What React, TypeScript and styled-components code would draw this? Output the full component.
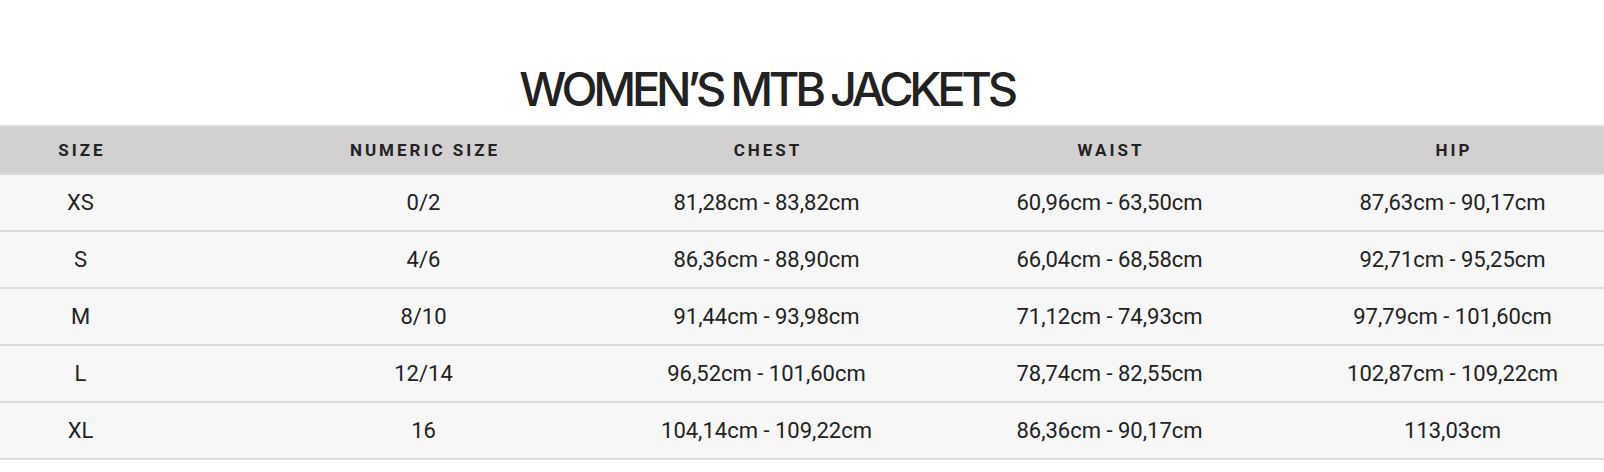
import React, { FC } from "react";
import styled, { createGlobalStyle } from "styled-components";

const GlobalStyle = createGlobalStyle`
  html, body {
    margin: 0;
    padding: 0;
    background: #ffffff;
  }

  body {
    width: 1604px;
    height: 472px;
    overflow: hidden;
  }
`;

const Page = styled.div`
  width: 1604px;
  overflow: hidden;
`;

const Sheet = styled.section`
  width: 1715px;
  margin-left: -91px;
`;

const Title = styled.h2`
  margin: 0;
  padding: 65px 0 13px;

  font-family: Inter, "Liberation Sans", sans-serif;
  font-size: 47px;
  font-weight: 500;
  line-height: 47px;
  letter-spacing: -4.3px;
  text-align: center;
  color: #222222;
`;

const Table = styled.table`
  width: 100%;
  border-collapse: collapse;
  table-layout: fixed;
  font-family: Roboto, "Liberation Sans", sans-serif;
  color: #222222;
`;

const HeadRow = styled.tr`
  background: #d2d0d1;
  border-top: 2px solid #dcdcdc;
  border-bottom: 2px solid #dcdcdc;
`;

const HeadCell = styled.th`
  height: 46px;
  padding: 0 0 0 3px;

  font-size: 17px;
  font-weight: 700;
  letter-spacing: 3px;
  text-align: center;
  vertical-align: middle;
`;

const Row = styled.tr`
  background: #f7f7f7;
  border-bottom: 2px solid #dcdcdc;
`;

const Cell = styled.td`
  height: 55px;
  padding: 0;

  font-size: 22px;
  font-weight: 400;
  text-align: center;
  vertical-align: middle;
`;

interface SizeRow {
  size: string;
  numeric: string;
  chest: string;
  waist: string;
  hip: string;
}

const columns = ["Size", "Numeric size", "Chest", "Waist", "Hip"];

const rows: SizeRow[] = [
  {
    size: "XS",
    numeric: "0/2",
    chest: "81,28cm - 83,82cm",
    waist: "60,96cm - 63,50cm",
    hip: "87,63cm - 90,17cm",
  },
  {
    size: "S",
    numeric: "4/6",
    chest: "86,36cm - 88,90cm",
    waist: "66,04cm - 68,58cm",
    hip: "92,71cm - 95,25cm",
  },
  {
    size: "M",
    numeric: "8/10",
    chest: "91,44cm - 93,98cm",
    waist: "71,12cm - 74,93cm",
    hip: "97,79cm - 101,60cm",
  },
  {
    size: "L",
    numeric: "12/14",
    chest: "96,52cm - 101,60cm",
    waist: "78,74cm - 82,55cm",
    hip: "102,87cm - 109,22cm",
  },
  {
    size: "XL",
    numeric: "16",
    chest: "104,14cm - 109,22cm",
    waist: "86,36cm - 90,17cm",
    hip: "113,03cm",
  },
];

const App: FC = () => (
  <Page>
    <GlobalStyle />
    <Sheet>
      <Title>WOMEN’S MTB JACKETS</Title>
      <Table>
        <thead>
          <HeadRow>
            {columns.map(c => (
              <HeadCell key={c}>{c.toUpperCase()}</HeadCell>
            ))}
          </HeadRow>
        </thead>
        <tbody>
          {rows.map(r => (
            <Row key={r.size}>
              <Cell>{r.size}</Cell>
              <Cell>{r.numeric}</Cell>
              <Cell>{r.chest}</Cell>
              <Cell>{r.waist}</Cell>
              <Cell>{r.hip}</Cell>
            </Row>
          ))}
        </tbody>
      </Table>
    </Sheet>
  </Page>
);

export default App;
